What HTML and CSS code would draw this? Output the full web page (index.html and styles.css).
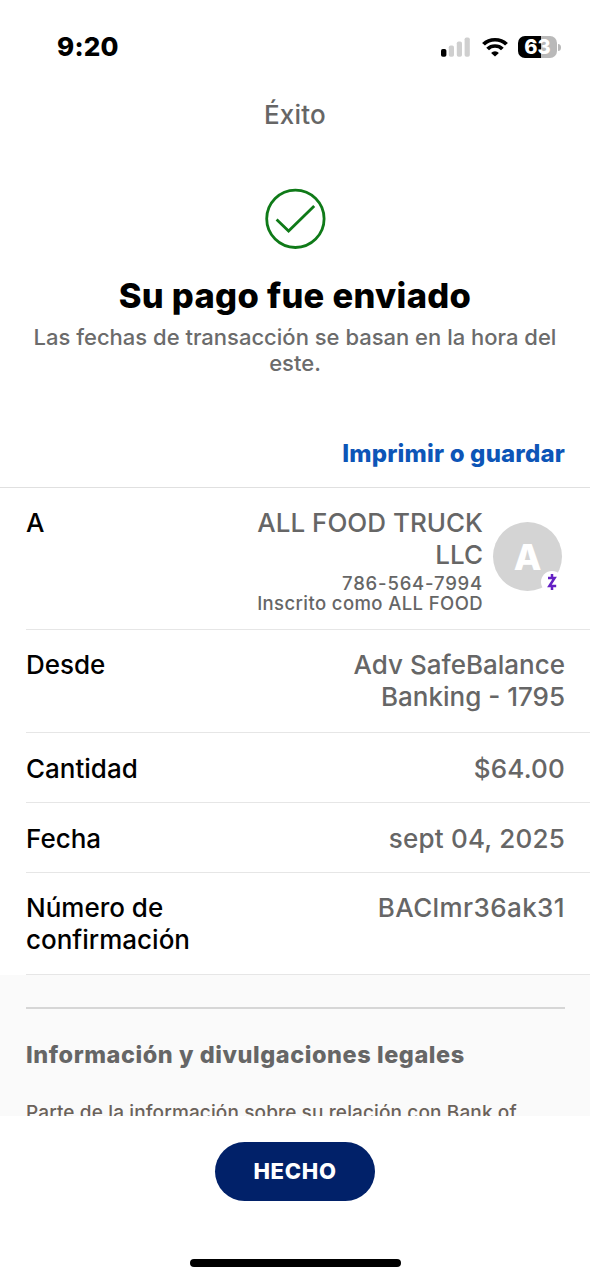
FILE: index.html
```
<!DOCTYPE html>
<html lang="es">
<head>
  <meta charset="UTF-8">
  <title>Éxito</title>
  <link rel="stylesheet" href="styles.css">
</head>
<body>

  <!-- Status bar -->
  <div class="status-bar">
    <span class="clock">9:20</span>
    <div class="status-icons">
      <svg class="signal" width="30" height="20" viewBox="0 0 30 20">
        <rect x="0" y="12" width="5.4" height="7.8" rx="1.8" fill="#000"/>
        <rect x="7.8" y="8.5" width="5.2" height="11.3" rx="1.8" fill="#cfcfcf"/>
        <rect x="15.8" y="4.5" width="5.2" height="15.3" rx="1.8" fill="#cfcfcf"/>
        <rect x="23.6" y="0.4" width="5.2" height="19.4" rx="1.8" fill="#cfcfcf"/>
      </svg>
      <svg class="wifi" width="26" height="20" viewBox="0 0 24 20" preserveAspectRatio="none">
        <path d="M1.4 7.2a14.8 14.8 0 0 1 21.2 0" fill="none" stroke="#000" stroke-width="3.7"/>
        <path d="M5.2 12a9.4 9.4 0 0 1 13.6 0" fill="none" stroke="#000" stroke-width="3.5"/>
        <path d="M12 19.6l-3.6-3.7a5 5 0 0 1 7.2 0z" fill="#000"/>
      </svg>
      <div class="battery">
        <span class="battery-level">63</span>
        <svg class="battery-tip" width="3" height="7" viewBox="0 0 3 7">
          <path d="M0 0a3 3.5 0 0 1 0 7z" fill="#b9b9b9"/>
        </svg>
      </div>
    </div>
  </div>

  <h1 class="page-title">Éxito</h1>

  <!-- Confirmation -->
  <div class="success">
    <svg class="check" width="62" height="62" viewBox="0 0 62 62">
      <circle cx="31.4" cy="30.8" r="28.7" fill="none" stroke="#0f7a18" stroke-width="2.8"/>
      <path d="M12.6 31.5l12 11.5L50.2 18" fill="none" stroke="#0f7a18" stroke-width="2.8"/>
    </svg>
    <h2>Su pago fue enviado</h2>
    <p>Las fechas de transacción se basan en la hora del este.</p>
  </div>

  <a class="print-link" href="#">Imprimir o guardar</a>

  <!-- Payment details -->
  <div class="details">
    <div class="row">
      <div class="label">A</div>
      <div class="recipient">
        <div class="value">
          <div class="name">ALL FOOD TRUCK LLC</div>
          <div class="small phone">786-564-7994</div>
          <div class="small">Inscrito como ALL FOOD</div>
        </div>
        <div class="avatar">
          A
          <span class="badge">
            <svg width="12" height="18" viewBox="0 0 12 18">
              <path d="M6 1v3.4M6 13.6V17M2 5h6.6L3.4 13h6.8" fill="none" stroke="#6420c4" stroke-width="2.5"/>
            </svg>
          </span>
        </div>
      </div>
    </div>
    <div class="row row-account">
      <div class="label">Desde</div>
      <div class="value account">Adv SafeBalance Banking - 1795</div>
    </div>
    <div class="row row-amount">
      <div class="label">Cantidad</div>
      <div class="value amount">$64.00</div>
    </div>
    <div class="row row-date">
      <div class="label">Fecha</div>
      <div class="value date">sept 04, 2025</div>
    </div>
    <div class="row">
      <div class="label">Número de confirmación</div>
      <div class="value code">BAClmr36ak31</div>
    </div>
  </div>

  <!-- Legal -->
  <div class="legal">
    <h3>Información y divulgaciones legales</h3>
    <p>Parte de la información sobre su relación con Bank of</p>
  </div>

  <!-- Footer -->
  <footer>
    <button class="done-button">HECHO</button>
    <div class="home-bar"></div>
  </footer>

</body>
</html>
```
FILE: styles.css
```
* {
  box-sizing: border-box;
  margin: 0;
  padding: 0;
}

body {
  font-family: Inter, 'Liberation Sans', sans-serif;
  font-weight: 500;
  background: #fff;
  color: #000;
  height: 1280px;
  display: flex;
  flex-direction: column;
  overflow: hidden;
}

.status-bar {
  display: flex;
  justify-content: space-between;
  align-items: center;
  height: 94px;
  padding: 0 29px 0 57px;
  flex-shrink: 0;
}

.clock {
  font-size: 26px;
  font-weight: 800;
  letter-spacing: 0.2px;
  padding-bottom: 2px;
}

.status-icons {
  display: flex;
  align-items: center;
}

.wifi {
  margin: 0 10px 0 11px;
}

.battery {
  display: flex;
  align-items: center;
  gap: 1px;
}

.battery-level {
  width: 39px;
  height: 22px;
  border-radius: 7px;
  background: linear-gradient(to right, #000 60%, #b9b9b9 60%);
  color: #fff;
  font-size: 20px;
  font-weight: 800;
  line-height: 22px;
  text-align: center;
}

.page-title {
  color: #666;
  font-size: 26px;
  font-weight: 500;
  letter-spacing: 0.2px;
  line-height: 41px;
  text-align: center;
}

.success {
  display: flex;
  flex-direction: column;
  align-items: center;
  margin-top: 53px;
  text-align: center;
}

.success h2 {
  font-size: 34.5px;
  font-weight: 800;
  letter-spacing: 0.3px;
  line-height: 42px;
  margin-top: 25px;
}

.success p {
  color: #6b6b6b;
  font-size: 22px;
  line-height: 26px;
  margin-top: 7px;
  padding: 0 20px;
}

.print-link {
  color: #0d55b7;
  font-size: 24px;
  font-weight: 800;
  letter-spacing: 0.18px;
  line-height: 30px;
  text-align: right;
  text-decoration: none;
  margin-top: 63px;
  padding-right: 25px;
}

.details {
  border-top: 1px solid #e0e0e0;
  margin-top: 18px;
  padding-left: 26px;
}

.row {
  display: flex;
  justify-content: space-between;
  border-bottom: 1px solid #e6e6e6;
  padding: 19px 25px 19px 0;
  font-size: 26px;
  line-height: 31.5px;
}

.row-account {
  padding-bottom: 20px;
}

.row-amount {
  padding-top: 20px;
  padding-bottom: 17px;
}

.row-date {
  padding-top: 20px;
  padding-bottom: 18px;
}

.label {
  width: 180px;
}

.value {
  color: #666;
  text-align: right;
}

.recipient {
  display: flex;
  align-items: flex-start;
  gap: 10px;
  margin-right: 3px;
}

.name {
  width: 230px;
  margin-left: auto;
  margin-bottom: 3px;
}

.account {
  width: 230px;
}

.amount,
.date {
  letter-spacing: 0.2px;
}

.code {
  letter-spacing: 0.4px;
}

.small {
  font-size: 18.5px;
  letter-spacing: 0.4px;
  line-height: 20px;
}

.small:last-child {
  margin-bottom: -3px;
}

.phone {
  letter-spacing: 0.8px;
}

.avatar {
  position: relative;
  width: 69px;
  height: 69px;
  margin-top: 15px;
  border-radius: 50%;
  background: #d4d4d4;
  color: #fff;
  font-size: 36px;
  font-weight: 800;
  line-height: 70px;
  text-align: center;
}

.badge {
  position: absolute;
  right: -1px;
  bottom: -2px;
  width: 22px;
  height: 22px;
  border-radius: 50%;
  background: #fff;
  display: flex;
  align-items: center;
  justify-content: center;
}

.legal {
  flex: 1;
  min-height: 0;
  overflow: hidden;
  background: #fafafa;
  padding: 32px 25px 0 26px;
}

.legal h3 {
  border-top: 2px solid #d6d6d6;
  color: #666;
  font-size: 23.5px;
  font-weight: 800;
  letter-spacing: 0.56px;
  line-height: 30px;
  padding-top: 31px;
}

.legal p {
  color: #6b625a;
  font-size: 19px;
  letter-spacing: 0.13px;
  line-height: 26px;
  margin-top: 30px;
  white-space: nowrap;
}

footer {
  display: flex;
  flex-direction: column;
  align-items: center;
  justify-content: space-between;
  height: 164px;
  padding: 26px 0 13px;
  background: #fff;
  flex-shrink: 0;
}

.done-button {
  width: 160px;
  height: 59px;
  border: none;
  border-radius: 30px;
  background: #012169;
  color: #fff;
  font-family: inherit;
  font-size: 22px;
  font-weight: 800;
  letter-spacing: 0.7px;
  padding-bottom: 2px;
}

.home-bar {
  width: 211px;
  height: 8px;
  border-radius: 4px;
  background: #000;
}
```
